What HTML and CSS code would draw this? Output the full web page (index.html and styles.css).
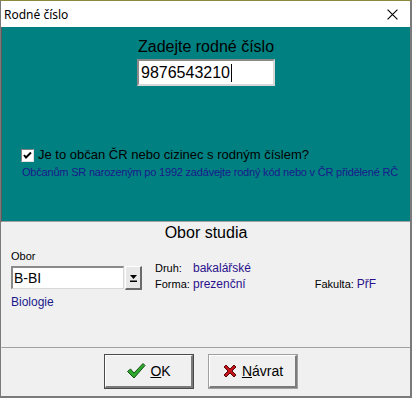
FILE: index.html
```html
<!DOCTYPE html>
<html lang="cs">
<head>
  <meta charset="UTF-8" />
  <title>Rodné číslo</title>
  <link rel="stylesheet" href="styles.css">
</head>
<body>
  <div class="window">
    <!-- title bar -->
    <div class="titlebar">
      <span class="title">Rodné číslo</span>
      <svg class="close" viewBox="0 0 10 10" width="11" height="11">
        <path d="M0.5 0.5 L9.5 9.5 M9.5 0.5 L0.5 9.5" stroke="#000" stroke-width="1" fill="none"/>
      </svg>
    </div>

    <!-- teal part: birth number -->
    <div class="panel-rc">
      <div class="heading">Zadejte rodné číslo</div>
      <div class="rc-input"><span>9876543210</span><span class="caret"></span></div>
      <label class="check-row">
        <span class="checkbox">
          <svg viewBox="0 0 9 9" width="9" height="9">
            <path d="M1 4 L3 6.5 L8 1.5" stroke="#000" stroke-width="2" fill="none"/>
          </svg>
        </span>
        Je to občan ČR nebo cizinec s rodným číslem?
      </label>
      <div class="hint">Občanům SR narozeným po 1992 zadávejte rodný kód nebo v ČR přidělené RČ</div>
    </div>

    <!-- field of study -->
    <div class="panel-obor">
      <div class="heading">Obor studia</div>
      <div class="obor-row">
        <div class="obor-col">
          <div class="small-label">Obor</div>
          <div class="combo">
            <div class="combo-box">B-BI</div>
            <div class="combo-btn">
              <svg viewBox="0 0 9 10" width="9" height="10">
                <path d="M1 2 H8 L4.5 6 Z" fill="#000"/>
                <rect x="1" y="7.5" width="7" height="1.5" fill="#000"/>
              </svg>
            </div>
          </div>
          <div class="obor-name">Biologie</div>
        </div>
        <div class="info">
          <div class="info-line"><span class="small-label key">Druh:</span><span class="val">bakalářské</span></div>
          <div class="info-line">
            <span class="small-label key">Forma:</span><span class="val">prezenční</span>
            <span class="small-label fak">Fakulta:</span><span class="val">PřF</span>
          </div>
        </div>
      </div>
    </div>

    <!-- buttons -->
    <div class="buttons">
      <button class="btn default">
        <svg viewBox="0 0 20 18" width="20" height="18">
          <path d="M1.5 9.5 L4.5 7 L8 11 L17 1.5 L19 3.5 L8 16 Z" fill="#2ea82e" stroke="#145214" stroke-width="1"/>
        </svg>
        <span><u>O</u>K</span>
      </button>
      <button class="btn">
        <svg viewBox="0 0 16 16" width="16" height="16">
          <path d="M2 4 L4 2 L8 6 L12 2 L14 4 L10 8 L14 12 L12 14 L8 10 L4 14 L2 12 L6 8 Z" fill="#c4141a" stroke="#5a0a0a" stroke-width="1"/>
        </svg>
        <span><u>N</u>ávrat</span>
      </button>
    </div>
  </div>
</body>
</html>
```

FILE: styles.css
```css
body {
  margin: 0;
  font-family: Arial, "Liberation Sans", sans-serif;
  background: #f0f0f0;
}
.window {
  width: 409px;
  height: 395px;
  border-top: 1px solid #8a8a3a;
  border-left: 1px solid #7a7a7a;
  border-right: 2px solid #7a7a7a;
  border-bottom: 2px solid #7a7a7a;
  background: #f0f0f0;
  display: flex;
  flex-direction: column;
}
.titlebar {
  height: 26px;
  background: #fff;
  display: flex;
  align-items: center;
  justify-content: space-between;
  padding: 0 12px 0 3px;
}
.title {
  font-family: "Noto Sans", "DejaVu Sans", sans-serif;
  font-size: 12px;
  color: #000;
}
.close {
  display: block;
}

/* teal panel */
.panel-rc {
  height: 195px;
  background: #008080;
  border-left: 1px solid #5a5a5a;
  border-bottom: 1px solid #a0a0a0;
  box-sizing: border-box;
}
.heading {
  text-align: center;
  font-size: 16px;
  line-height: 18px;
  color: #000;
}
.panel-rc .heading {
  padding-top: 11px;
}
.rc-input {
  width: 138px;
  height: 27px;
  margin: 3px 0 0 135px;
  box-sizing: border-box;
  background: #fff;
  border-top: 2px solid #8a8a8a;
  border-left: 2px solid #8a8a8a;
  border-right: 2px solid #d8d8d8;
  border-bottom: 2px solid #d8d8d8;
  font-size: 16px;
  line-height: 22px;
  padding-left: 2px;
  display: flex;
  align-items: center;
}
.caret {
  display: inline-block;
  width: 1px;
  height: 18px;
  background: #000;
  margin-left: 1px;
}
.check-row {
  display: flex;
  align-items: center;
  margin: 61px 0 0 19px;
  font-size: 13px;
  line-height: 16px;
  color: #000;
}
.checkbox {
  width: 13px;
  height: 13px;
  box-sizing: border-box;
  background: #fff;
  border-top: 1px solid #808080;
  border-left: 1px solid #808080;
  border-right: 1px solid #e0e0e0;
  border-bottom: 1px solid #e0e0e0;
  display: flex;
  align-items: center;
  justify-content: center;
  margin-right: 4px;
}
.checkbox svg {
  display: block;
}
.hint {
  margin: 3px 0 0 20px;
  font-size: 11px;
  line-height: 13px;
  letter-spacing: -0.2px;
  white-space: nowrap;
  color: #1a1a8c;
}

/* field of study */
.panel-obor {
  height: 126px;
  border-left: 1px solid #f0f0f0;
  border-bottom: 1px solid #a0a0a0;
  box-sizing: border-box;
}
.panel-obor .heading {
  padding-top: 2px;
}
.obor-row {
  display: flex;
  margin-top: 8px;
}
.obor-col {
  margin-left: 9px;
  width: 136px;
}
.small-label {
  font-size: 11px;
  line-height: 13px;
  color: #000;
}
.combo {
  display: flex;
  margin-top: 3px;
}
.combo-box {
  width: 113px;
  height: 23px;
  box-sizing: border-box;
  background: #fff;
  border-top: 2px solid #8a8a8a;
  border-left: 2px solid #8a8a8a;
  border-right: 1px solid #d8d8d8;
  border-bottom: 1px solid #d8d8d8;
  font-size: 14px;
  line-height: 20px;
  padding-left: 1px;
}
.combo-btn {
  width: 17px;
  height: 24px;
  margin-left: 1px;
  box-sizing: border-box;
  border-top: 1px solid #fff;
  border-left: 1px solid #fff;
  border-right: 2px solid #6a6a6a;
  border-bottom: 2px solid #6a6a6a;
  background: #e8e8e8;
  display: flex;
  align-items: center;
  justify-content: center;
}
.obor-name {
  margin-top: 5px;
  font-size: 12px;
  line-height: 14px;
  color: #1a1a8c;
}
.info {
  margin-left: 8px;
  padding-top: 11px;
}
.info-line {
  display: flex;
  align-items: baseline;
  height: 16px;
}
.key {
  width: 38px;
}
.val {
  font-size: 12px;
  color: #2a108c;
}
.fak {
  margin-left: 69px;
  margin-right: 3px;
}

/* buttons */
.buttons {
  flex: 1;
  display: flex;
  gap: 16px;
  padding: 7px 0 0 104px;
}
.btn {
  width: 88px;
  height: 33px;
  box-sizing: border-box;
  background: #f0f0f0;
  border-top: 1px solid #fff;
  border-left: 1px solid #fff;
  border-right: 2px solid #7a7a7a;
  border-bottom: 2px solid #7a7a7a;
  outline: 1px solid #a0a0a0;
  display: flex;
  align-items: center;
  justify-content: center;
  gap: 4px;
  font-family: Arial, "Liberation Sans", sans-serif;
  font-size: 14px;
  color: #000;
  padding: 0;
}
.btn.default {
  outline: 1px solid #4a4a4a;
}
.btn svg {
  display: block;
}
```
